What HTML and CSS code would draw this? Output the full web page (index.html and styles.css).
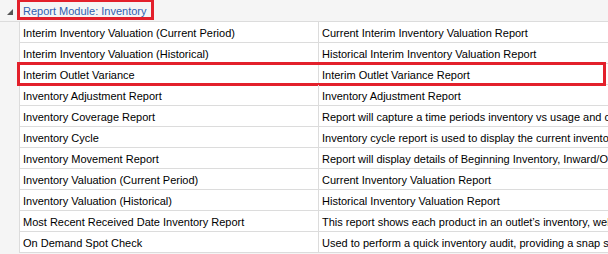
FILE: index.html
```html
<!DOCTYPE html>
<html>
<head>
<meta charset="utf-8">
<link rel="stylesheet" href="styles.css">
</head>
<body>
<div class="grid">
  <div class="group">
    <span class="expander"></span>
    <span class="group-title">Report Module: Inventory</span>
  </div>
  <div class="rows">
    <div class="row"><div class="cell name">Interim Inventory Valuation (Current Period)</div><div class="cell desc">Current Interim Inventory Valuation Report</div></div>
    <div class="row"><div class="cell name">Interim Inventory Valuation (Historical)</div><div class="cell desc">Historical Interim Inventory Valuation Report</div></div>
    <div class="row highlight"><div class="cell name">Interim Outlet Variance</div><div class="cell desc">Interim Outlet Variance Report</div></div>
    <div class="row"><div class="cell name">Inventory Adjustment Report</div><div class="cell desc">Inventory Adjustment Report</div></div>
    <div class="row"><div class="cell name">Inventory Coverage Report</div><div class="cell desc">Report will capture a time periods inventory vs usage and calculate coverage</div></div>
    <div class="row"><div class="cell name">Inventory Cycle</div><div class="cell desc">Inventory cycle report is used to display the current inventory cycle</div></div>
    <div class="row"><div class="cell name">Inventory Movement Report</div><div class="cell desc">Report will display details of Beginning Inventory, Inward/Outward movement</div></div>
    <div class="row"><div class="cell name">Inventory Valuation (Current Period)</div><div class="cell desc">Current Inventory Valuation Report</div></div>
    <div class="row"><div class="cell name">Inventory Valuation (Historical)</div><div class="cell desc">Historical Inventory Valuation Report</div></div>
    <div class="row"><div class="cell name">Most Recent Received Date Inventory Report</div><div class="cell desc">This report shows each product in an outlet’s inventory, well as the date received</div></div>
    <div class="row"><div class="cell name">On Demand Spot Check</div><div class="cell desc">Used to perform a quick inventory audit, providing a snap shot of inventory</div></div>
  </div>
</div>
</body>
</html>
```

FILE: styles.css
```css
html, body {
  margin: 0;
  padding: 0;
  background: #f5f5f5;
  overflow: hidden;
}
.grid {
  width: 608px;
  height: 254px;
  font-family: "Liberation Sans", Arial, sans-serif;
  font-size: 11px;
  color: #000;
  overflow: hidden;
}
.group {
  height: 22px;
  display: flex;
  align-items: center;
  background: #f5f5f5;
  border-bottom: 1px solid #dcdcdc;
  box-sizing: border-box;
}
.expander {
  width: 0;
  height: 0;
  margin-left: 7px;
  margin-top: 3px;
  border-left: 6px solid transparent;
  border-bottom: 6px solid #555;
}
.group-title {
  margin-left: 8px;
  color: #3060b0;
  position: relative;
  padding: 0 2px;
}
.group-title::after {
  content: "";
  position: absolute;
  left: -4px;
  top: -6px;
  width: 131px;
  height: 15px;
  border: 3px solid #e3202b;
}
.rows {
  margin-left: 19px;
  background: #fff;
  border-left: 1px solid #dcdcdc;
}
.row {
  display: flex;
  height: 21px;
  border-bottom: 1px solid #dcdcdc;
  box-sizing: border-box;
  position: relative;
}
.cell {
  display: flex;
  align-items: center;
  padding-left: 3px;
  padding-top: 1px;
  white-space: nowrap;
  overflow: hidden;
  box-sizing: border-box;
}
.name {
  width: 299px;
  flex: none;
  border-right: 1px solid #dcdcdc;
}
.desc {
  flex: 1;
  padding-left: 3px;
}
.highlight::after {
  content: "";
  position: absolute;
  left: -3px;
  right: 2px;
  top: -2px;
  bottom: -2px;
  border: 3px solid #e3202b;
}
```
